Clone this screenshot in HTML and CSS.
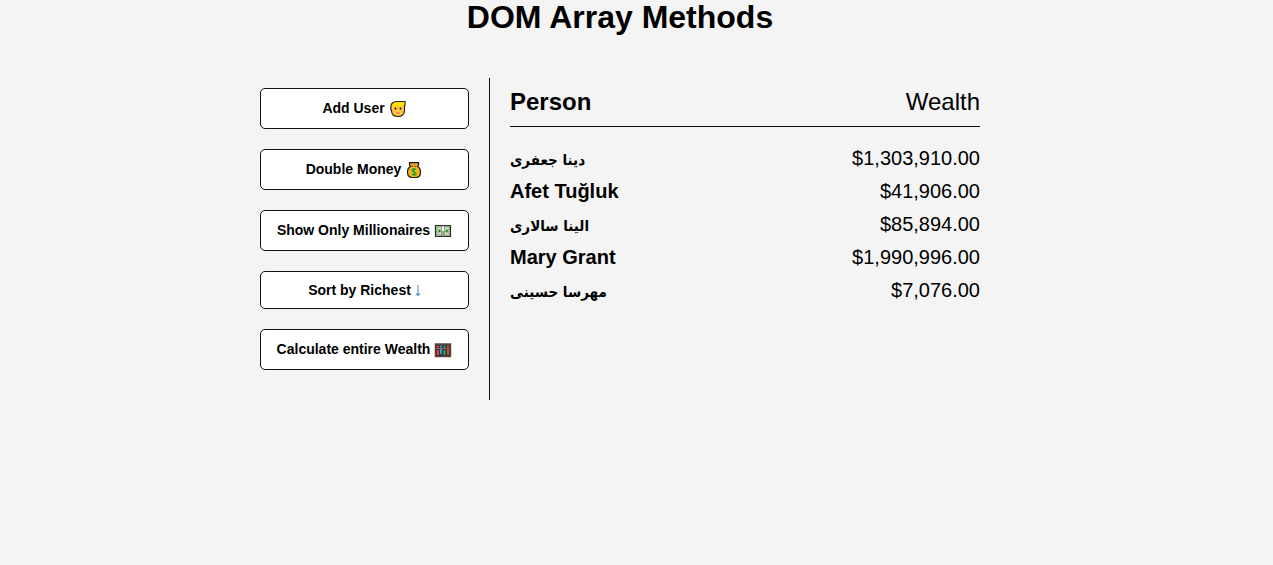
FILE: index.html
```html
<!DOCTYPE html>
<html lang="en">
<head>
<meta charset="utf-8">
<meta name="viewport" content="width=device-width, initial-scale=1">
<title>DOM Array Methods</title>
<link rel="stylesheet" href="styles.css">
</head>
<body>
<h1 class="title">DOM Array Methods</h1>
<div class="container">
  <aside class="actions">
    <button type="button" class="btn"><span>Add User</span>
      <svg class="icon" viewBox="0 0 18 18" aria-hidden="true"><path d="M4 2.500Q6 1.500 8.500 1.500h7.500v3.500l-.5 1V10q0 6.500-6.500 6.500T2.500 10.500Q1 9 2 7.500V6q0-2 2-3.500z" fill="#ffc83d" stroke="#2a2618" stroke-width="1.200"/><path d="M3 7V5.500q1-3 5.500-3.300h6.700V5H14v2q-2-1-5-1T3 7z" fill="#fce100"/><circle cx="6.500" cy="8.500" r=".9"/><circle cx="11.500" cy="8.500" r=".9"/><path d="M7 13h4" stroke="#f3785f" stroke-width="1.200"/><circle cx="4.500" cy="11.500" r="1" fill="#ffaa5a"/><circle cx="13.500" cy="11.500" r="1" fill="#ffaa5a"/></svg></button>
    <button type="button" class="btn"><span>Double Money</span>
      <svg class="icon" viewBox="0 0 18 18" aria-hidden="true"><path d="M4.500 1.500h9v2.500l-1 1.500q3 1.500 3 5.500 0 5.500-4.500 5.500H7q-4.500 0-4.500-5.500 0-4 3-5.500l-1-1.500z" fill="#f5b51d" stroke="#171717" stroke-width="1.200"/><path d="M5.500 2.800h7M6 5.300h6" stroke="#8c501b" stroke-width="1" stroke-dasharray="2 1"/><path d="M11 8.500Q7 7 7 9.300q0 1 2 1.500t2 1.900q0 2-4 .6M9 7v8" fill="none" stroke="#16a02d" stroke-width="1.200"/></svg></button>
    <button type="button" class="btn"><span>Show Only Millionaires</span>
      <svg class="icon" viewBox="0 0 18 18" aria-hidden="true"><path d="M1.500 3.500h15v11h-15z" fill="#b5d5a5" stroke="#292b29" stroke-width="1.200"/><path d="M3 5h12v8H3z" fill="#dcebca" stroke="#739171" stroke-width=".8"/><path d="M3.500 8l2-1.500L7 8v2l-2 1.500L3.500 10zM11 8l2-1.500 1.500 1.500v2L13 11.500 11 10z" fill="#8cc96e"/><circle cx="5.500" cy="9" r=".9" fill="#176d1e"/><circle cx="13" cy="9" r=".9" fill="#176d1e"/><path d="M7.500 4h3v10h-3z" fill="#f2f2f2" stroke="#858585" stroke-width=".8"/><path d="M9 9v5" stroke="#555"/></svg></button>
    <button type="button" class="btn btn-plain"><span>Sort by Richest</span>
      <svg class="arrow" viewBox="0 0 6 14" aria-hidden="true"><path d="M3 2v10.500M1 10.500l2 2 2-2" fill="none" stroke="#5b93bd" stroke-width="1.100"/></svg></button>
    <button type="button" class="btn"><span>Calculate entire Wealth</span>
      <svg class="icon" viewBox="0 0 18 18" aria-hidden="true"><path d="M1.500 3h15v12.500h-15z" fill="#33302f" stroke="#5d453f" stroke-width="1.500"/><path d="M3 4.500h2v2H3zM3 9h2v5H3z" fill="#f03a35"/><path d="M6 4.500h2v2H6zM6 8h2v5H6z" fill="#2f9ae8"/><path d="M9.500 4.500h2v2h-2zM9.500 9h2v5h-2z" fill="#20b05c"/><path d="M13 4.500h2v2h-2zM13 8.500h2v5h-2z" fill="#ec4a3c"/><path d="M2.500 7.500h13" stroke="#a36c58"/></svg></button>
  </aside>
  <main class="content">
    <table class="wealth">
      <thead><tr><th scope="col">Person</th><th scope="col" class="amount">Wealth</th></tr></thead>
      <tbody>
        <tr><th scope="row"><bdi class="persian" lang="fa">دینا جعفری</bdi></th><td class="amount">$1,303,910.00</td></tr>
        <tr><th scope="row">Afet Tuğluk</th><td class="amount">$41,906.00</td></tr>
        <tr><th scope="row"><bdi class="persian" lang="fa">الینا سالاری</bdi></th><td class="amount">$85,894.00</td></tr>
        <tr><th scope="row">Mary Grant</th><td class="amount">$1,990,996.00</td></tr>
        <tr><th scope="row"><bdi class="persian" lang="fa">مهرسا حسینی</bdi></th><td class="amount">$7,076.00</td></tr>
      </tbody>
    </table>
  </main>
</div>
</body>
</html>
```
FILE: styles.css
```css
* { box-sizing: border-box; }

body {
  margin: 0;
  padding: 0 33px 0 0;
  background: #f4f4f4;
  color: #000;
  font-family: "Liberation Sans", Arial, "DejaVu Sans", sans-serif;
}

.title {
  margin: 0 0 44px;
  font-size: 32px;
  line-height: 34px;
  text-align: center;
}

.container {
  display: flex;
  max-width: 720px;
  margin: 0 auto;
}

.actions {
  display: flex;
  flex: 0 0 230px;
  flex-direction: column;
  gap: 20px;
  padding: 10px 20px 30px 0;
  border-right: 1px solid #111;
}

.btn {
  display: flex;
  align-items: center;
  justify-content: center;
  gap: 4px;
  padding: 10px 0;
  border: 1px solid #111;
  border-radius: 5px;
  background: #fff;
  color: #000;
  font-family: inherit;
  font-size: 14px;
  font-weight: bold;
  line-height: 19px;
  cursor: pointer;
}

.btn-plain { line-height: 16px; }

.icon {
  width: 18px;
  height: 18px;
}

.arrow {
  width: 6px;
  height: 14px;
}

.content {
  flex: 1;
  padding: 10px 0 10px 20px;
}

.wealth {
  width: 100%;
  border-collapse: collapse;
  font-size: 20px;
  line-height: 33px;
}

.wealth th,
.wealth td {
  padding: 0;
  text-align: left;
}

.wealth thead th {
  padding-bottom: 10px;
  border-bottom: 1px solid #111;
  font-size: 24px;
  line-height: 28px;
}

.wealth .amount { text-align: right; }

.wealth thead .amount { font-weight: normal; }

.wealth tbody::before {
  content: "";
  display: block;
  height: 15px;
}

.persian {
  font-family: "DejaVu Sans Condensed", "DejaVu Sans", sans-serif;
  font-size: 15px;
  line-height: 16px;
  vertical-align: middle;
}
```
